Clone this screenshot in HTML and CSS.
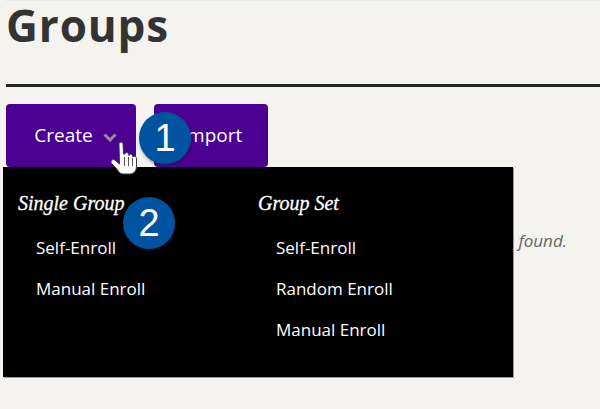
FILE: index.html
```html
<!DOCTYPE html>
<html lang="en">
<head>
    <meta charset="UTF-8">
    <meta name="viewport" content="width=device-width, initial-scale=1.0">
    <title>Groups</title>
    <link rel="stylesheet" href="styles.css">
</head>
<body>
    <div class="page">
        <h1 class="title">Groups</h1>
        <div class="actions">
            <button class="btn btn-create" type="button">Create
                <svg class="chevron" width="14" height="9" viewBox="0 0 14 9"><path d="M1.500 1.500 L7 7 L12.500 1.500" fill="none" stroke="#9a86a8" stroke-width="3"/></svg>
            </button>
            <button class="btn btn-import" type="button">Import</button>
        </div>
        <p class="empty">No groups found.</p>

        <div class="menu">
            <div class="menu-col">
                <h2 class="menu-head">Single Group</h2>
                <a class="menu-item">Self-Enroll</a>
                <a class="menu-item">Manual Enroll</a>
            </div>
            <div class="menu-col">
                <h2 class="menu-head">Group Set</h2>
                <a class="menu-item">Self-Enroll</a>
                <a class="menu-item">Random Enroll</a>
                <a class="menu-item">Manual Enroll</a>
            </div>
        </div>

        <svg class="hand" width="28" height="34" viewBox="0 0 28 34">
            <path d="M9 3 C9 .5 13 .5 13 3 L13.500 13 L15 13 C15.500 11 18.500 11 18.500 13.500 L19 14.500 C19.500 12.500 22.500 13 22.500 15 L23 16 C24 14.500 26.500 15.500 26.500 17.500 L26.500 25 C26.500 29.500 24 33 20 33 L13 33 C10 33 8.500 30.500 6.500 27.500 L1.500 22.500 C0 20 2.500 17.500 5 19 L9.500 23 Z" fill="#fff" stroke="#3a3a3a" stroke-width="1"/>
            <path d="M14.500 16 V25 M18.500 16 V25 M22.500 17 V25" stroke="#555" stroke-width="1" fill="none"/>
        </svg>
        <div class="bubble bubble-one">1</div>
        <div class="bubble bubble-two">2</div>
    </div>
</body>
</html>
```

FILE: styles.css
```css
html, body {
    margin: 0;
    height: 100%;
}

body {
    background: #f4f3ef;
    font-family: 'Open Sans', sans-serif;
    overflow: hidden;
}

.page {
    position: relative;
    height: 409px;
    padding-left: 6px;
}

.title {
    margin: 0;
    height: 84px;
    border-bottom: 3px solid #262626;
    box-shadow: inset 0 1px 0 #e8eaea;
    font-size: 44px;
    line-height: 50px;
    font-weight: 700;
    color: #333;
    letter-spacing: 0.9px;
}

.actions {
    display: flex;
    gap: 18px;
    margin-top: 17px;
}

.btn {
    height: 63px;
    border: none;
    border-radius: 4px;
    background: #4b0092;
    color: #fff;
    font-family: inherit;
    font-size: 19px;
    padding: 0 0 2px;
}

.btn-create {
    width: 130px;
    padding-left: 9px;
}

.btn-import {
    width: 114px;
    padding-left: 2px;
}

.chevron {
    margin-left: 5px;
}

.empty {
    margin: 62px 0 0;
    padding-left: 430px;
    font-size: 17px;
    font-style: italic;
    color: #666;
}

.menu {
    position: absolute;
    left: 3px;
    top: 167px;
    width: 510px;
    height: 210px;
    box-sizing: border-box;
    padding: 25px 15px 0;
    display: grid;
    grid-template-columns: 240px 240px;
    background: #000;
    box-shadow: 1px 1px 0 #999;
    color: #fff;
}

.menu-head {
    margin: 0 0 13px;
    font-family: 'Liberation Serif', serif;
    font-size: 20px;
    line-height: 22px;
    font-style: italic;
    font-weight: 400;
    -webkit-text-stroke: 0.3px #fff;
}

.menu-item {
    display: block;
    height: 41px;
    line-height: 41px;
    padding-left: 18px;
    font-size: 17px;
}

.bubble {
    position: absolute;
    width: 52px;
    height: 52px;
    border-radius: 50%;
    background: #00539f;
    color: #fff;
    font-family: 'Liberation Sans', sans-serif;
    font-size: 38px;
    line-height: 52px;
    text-align: center;
    box-shadow: 1px 2px 3px rgba(40, 20, 80, 0.5);
}

.bubble-one {
    left: 139px;
    top: 112px;
}

.bubble-two {
    left: 123px;
    top: 197px;
}

.hand {
    position: absolute;
    left: 110px;
    top: 141px;
}
```
